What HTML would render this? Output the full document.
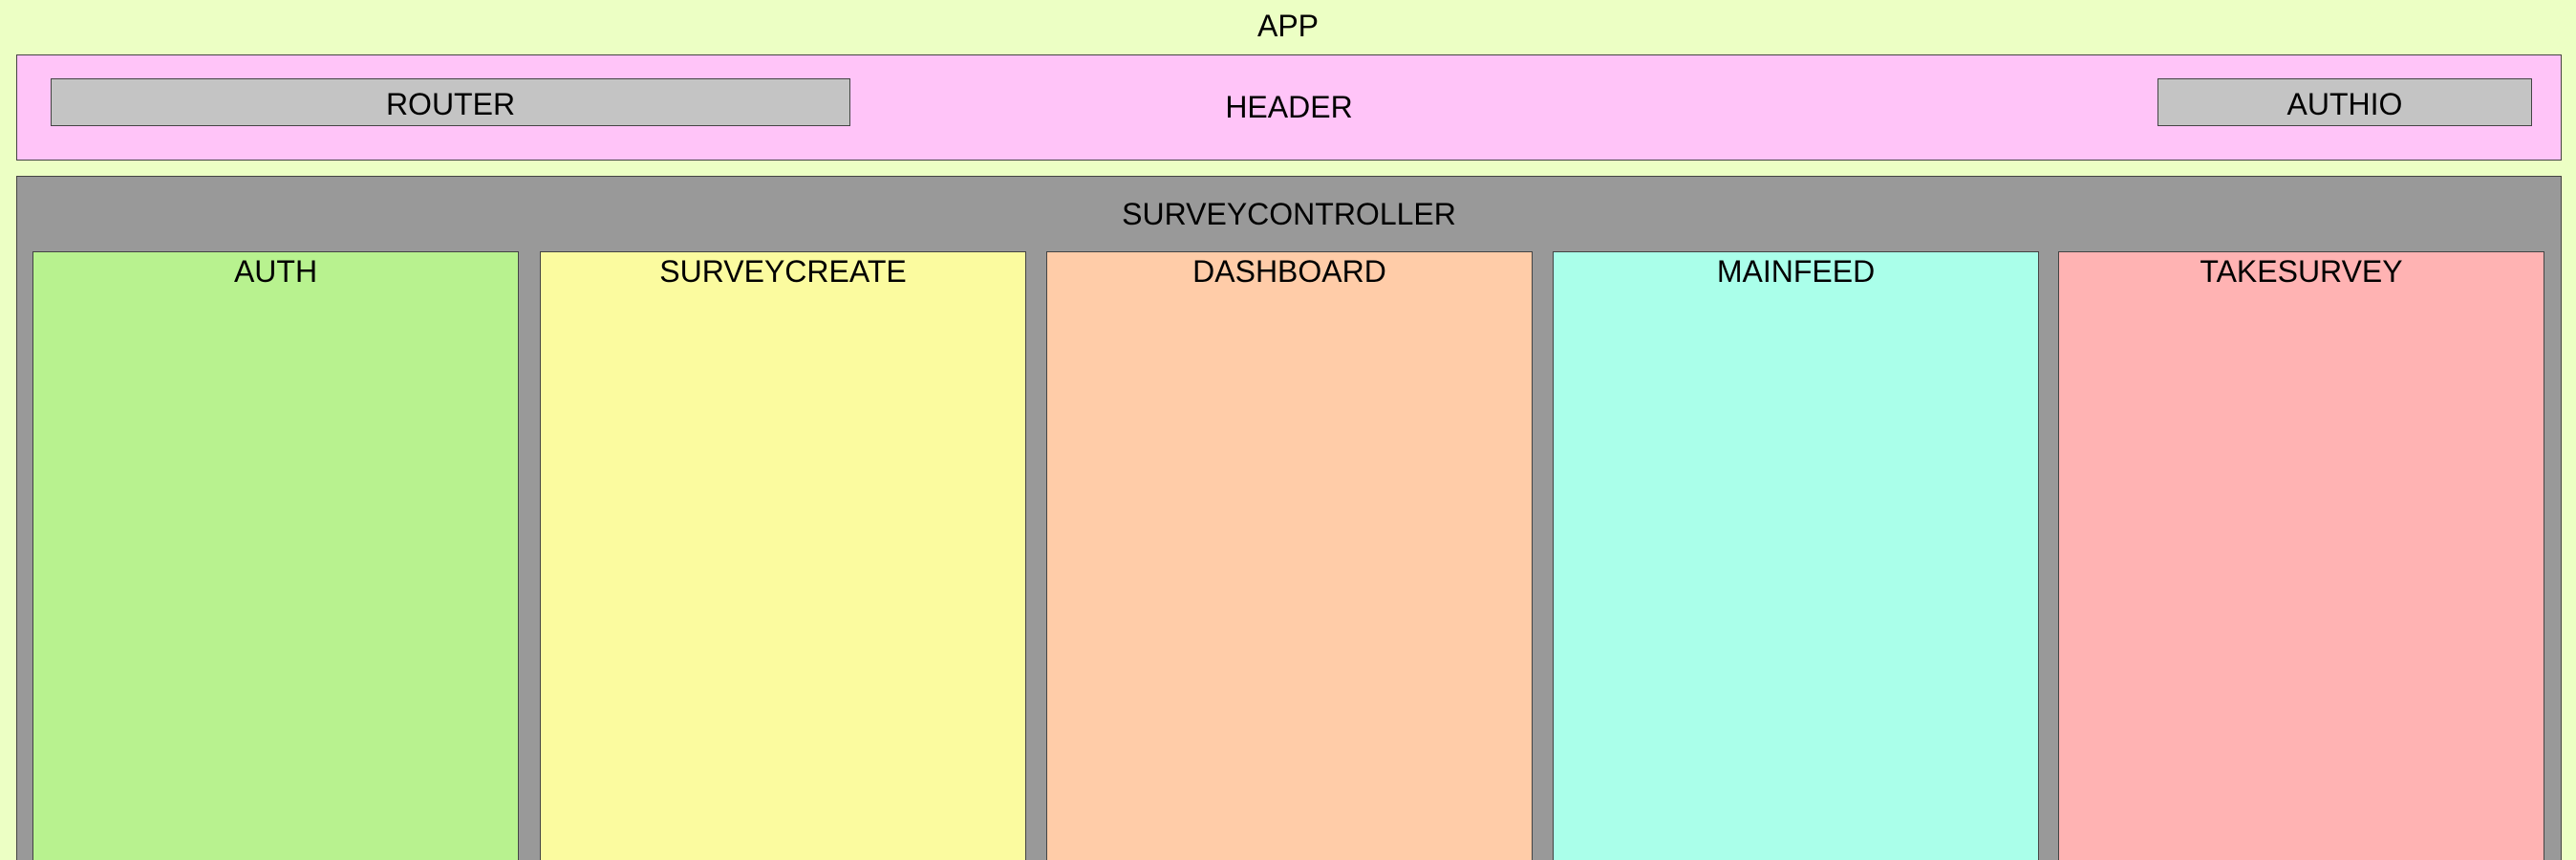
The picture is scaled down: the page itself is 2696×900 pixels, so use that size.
<!DOCTYPE html>
<html style="overflow:hidden;width:2696px;height:900px"><head><meta charset="utf-8"><style>
*{margin:0;padding:0;box-sizing:border-box}
body{width:2696px;height:900px;overflow:hidden;background:#ecffc4;font-family:"Liberation Sans",Arial,sans-serif;font-size:32px;color:#000;position:relative}
.a{position:absolute}
.b{border:1.5px solid #444}
.t{position:absolute;left:0;right:0;text-align:center}
</style></head><body>
<div class="t" style="top:9px">APP</div>
<div class="a b" style="left:17px;top:57px;width:2664px;height:111px;background:#ffc4f8">
  <div class="t" style="top:36px">HEADER</div>
</div>
<div class="a b" style="left:53px;top:82px;width:837px;height:50px;background:#c4c4c4"><div class="t" style="top:8px">ROUTER</div></div>
<div class="a b" style="left:2258px;top:82px;width:392px;height:50px;background:#c4c4c4"><div class="t" style="top:8px">AUTHIO</div></div>
<div class="a b" style="left:17px;top:184px;width:2664px;height:716px;background:#999999;border-bottom:none">
  <div class="t" style="top:21px">SURVEYCONTROLLER</div>
</div>
<div class="a b" style="left:34px;top:263px;width:509px;height:637px;background:#b8f28f;border-bottom:none"><div class="t" style="top:2px">AUTH</div></div>
<div class="a b" style="left:565px;top:263px;width:509px;height:637px;background:#fbfb9f;border-bottom:none"><div class="t" style="top:2px">SURVEYCREATE</div></div>
<div class="a b" style="left:1095px;top:263px;width:509px;height:637px;background:#ffcca8;border-bottom:none"><div class="t" style="top:2px">DASHBOARD</div></div>
<div class="a b" style="left:1625px;top:263px;width:509px;height:637px;background:#aaffea;border-bottom:none"><div class="t" style="top:2px">MAINFEED</div></div>
<div class="a b" style="left:2154px;top:263px;width:509px;height:637px;background:#ffb3b3;border-bottom:none"><div class="t" style="top:2px">TAKESURVEY</div></div>
</body></html>
